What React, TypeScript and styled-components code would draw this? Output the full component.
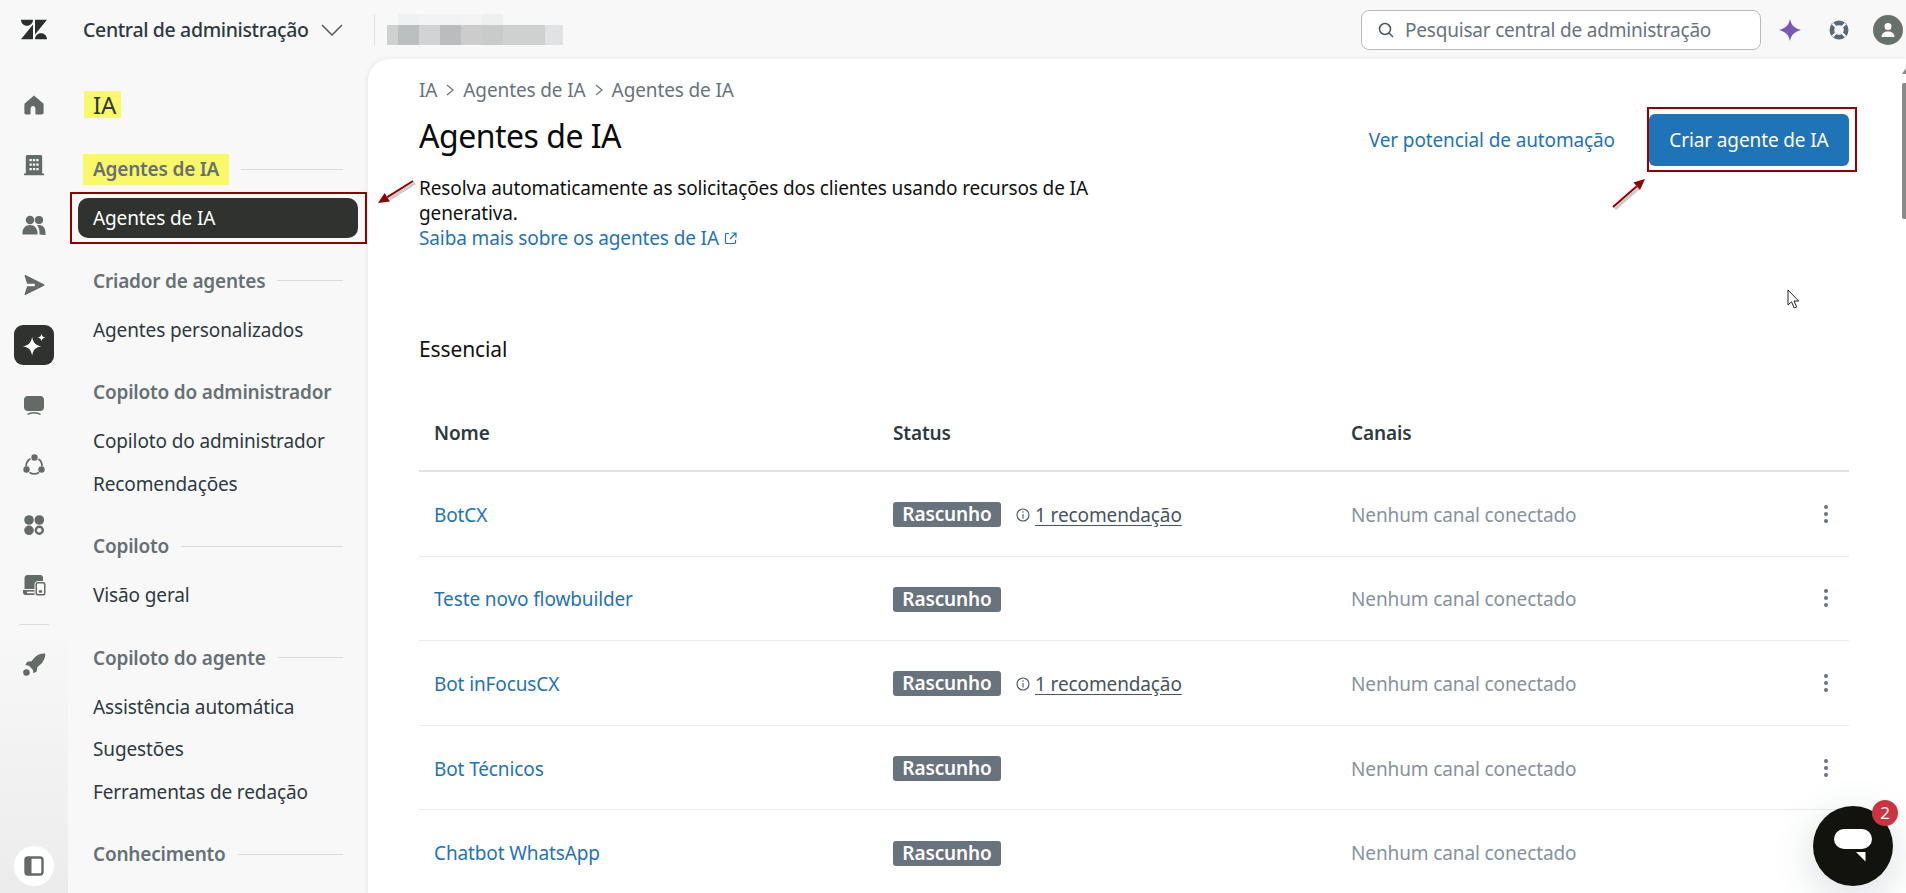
import React from 'react'
import styled, { createGlobalStyle } from 'styled-components'

const GlobalStyle = createGlobalStyle`
  html, body {
    margin: 0;
    padding: 0;
    height: 100%;
    overflow: hidden;
    background: #f8f8f8;
    font-family: "Noto Sans", "Open Sans", "Liberation Sans", sans-serif;
    font-size: 19px;
    letter-spacing: -0.12px;
    color: #2f3941;
  }
`

const Page = styled.div`
  position: relative;
  width: 1906px;
  height: 893px;
  display: flex;
  flex-direction: column;
  overflow: hidden;
  background: #f8f8f8;
`

/* top bar */
const TopBar = styled.header`
  flex: 0 0 59px;
  display: flex;
  align-items: center;
`
const LogoSlot = styled.div`
  width: 68px;
  display: flex;
  justify-content: center;
`
const ProductName = styled.div`
  margin-left: 15px;
  font-size: 19.5px;
  font-weight: 500;
  letter-spacing: -0.35px;
  white-space: nowrap;
  color: #2f3941;
`
const Chevron = styled.svg`
  margin-left: 12px;
  width: 22px;
  height: 12px;
`
const TopDivider = styled.div`
  width: 1px;
  height: 30px;
  margin-left: 31px;
  background: #e0e0e0;
`
const Mosaic = styled.div`
  margin-left: 12px;
  width: 176px;
  height: 31px;
  display: flex;
  flex-direction: column;
  align-self: center;
`
const MosaicRow = styled.div`
  display: flex;
  height: ${(p: { $h: number }) => p.$h}px;
`
const Pixel = styled.div<{ $w: number; $c: string }>`
  width: ${(p) => p.$w}px;
  background: ${(p) => p.$c};
`
const SearchBox = styled.div`
  margin-left: auto;
  width: 400px;
  height: 40px;
  box-sizing: border-box;
  display: flex;
  align-items: center;
  gap: 11px;
  padding-left: 16px;
  background: #fff;
  border: 1px solid #b9bbbb;
  border-radius: 8px;
  color: #68737d;
  letter-spacing: -0.2px;
  white-space: nowrap;
`
const TopIcons = styled.div`
  display: flex;
  align-items: center;
  margin-left: 14px;
  margin-right: 3px;
  gap: 19px;
`
const TopIconSlot = styled.div`
  width: 30px;
  height: 30px;
  display: flex;
  align-items: center;
  justify-content: center;
`
const Avatar = styled.div`
  width: 30px;
  height: 30px;
  border-radius: 50%;
  background: #68716c;
  display: flex;
  align-items: center;
  justify-content: center;
`

/* body */
const Body = styled.div`
  flex: 1;
  min-height: 0;
  display: flex;
`
const Rail = styled.nav`
  flex: 0 0 68px;
  display: flex;
  flex-direction: column;
  align-items: center;
  padding: 16px 0 7px;
  box-sizing: border-box;
  background: linear-gradient(to bottom, #f8f8f8 0%, #f8f8f8 68%, #ececec 100%);
`
const RailItem = styled.div<{ $active?: boolean }>`
  width: 60px;
  height: 60px;
  display: flex;
  align-items: center;
  justify-content: center;
  & > div {
    width: 40px;
    height: 40px;
    border-radius: 9px;
    display: flex;
    align-items: center;
    justify-content: center;
    background: ${(p) => (p.$active ? '#303230' : 'transparent')};
  }
`
const RailDivider = styled.div`
  width: 30px;
  height: 1px;
  margin: 9px 0 10px;
  background: #dcdcdc;
`
const CollapseButton = styled.div`
  margin-top: auto;
  width: 40px;
  height: 40px;
  border-radius: 50%;
  background: #fff;
  display: flex;
  align-items: center;
  justify-content: center;
`

const SideNav = styled.aside`
  flex: 0 0 300px;
  box-sizing: border-box;
  padding: 32px 25px 0;
  overflow: hidden;
`
const NavTitle = styled.div`
  display: inline-block;
  height: 27px;
  line-height: 27px;
  padding: 0 5px 0 9px;
  margin-left: -9px;
  font-size: 24px;
  background: #f8f868;
  color: #2f3941;
`
const NavSection = styled.div<{ $first?: boolean }>`
  margin-top: ${(p) => (p.$first ? '35px' : '27px')};
`
const NavHeading = styled.div`
  height: 28px;
  margin-bottom: 14px;
  display: flex;
  align-items: center;
  font-weight: 600;
  letter-spacing: -0.2px;
  color: #667075;
  white-space: nowrap;
  &::after {
    content: '';
    flex: 1;
    height: 1px;
    margin-left: 12px;
    background: #d8dcde;
  }
`
const Highlight = styled.span`
  background: #f8f868;
  padding: 2px 0 3px 10px;
  margin-left: -10px;
  padding-right: 10px;
  margin-right: -10px;
`
const NavItem = styled.div<{ $active?: boolean }>`
  height: 42.5px;
  display: flex;
  align-items: center;
  margin: 0 -15px;
  white-space: nowrap;
  color: ${(p) => (p.$active ? '#fff' : '#2f3941')};
  & > span {
    flex: 1;
    height: 40px;
    line-height: 40px;
    padding-left: 15px;
    border-radius: 10px;
    background: ${(p) => (p.$active ? '#303230' : 'transparent')};
  }
`

const Main = styled.main`
  position: relative;
  flex: 1;
  min-width: 0;
  box-sizing: border-box;
  padding: 19px 57px 0 51px;
  background: #fff;
  border-top-left-radius: 22px;
  box-shadow: -1px 0 5px rgba(0, 0, 0, 0.07);
  overflow: hidden;
`
const Header = styled.div`
  display: flex;
  justify-content: space-between;
  align-items: flex-start;
`
const Breadcrumb = styled.div`
  height: 24px;
  display: flex;
  align-items: center;
  gap: 8px;
  color: #68737d;
`
const Title = styled.h1`
  margin: 12px 0 0;
  height: 44px;
  line-height: 44px;
  font-size: 32px;
  font-weight: 400;
  letter-spacing: -0.5px;
  color: #0b0b0b;
`
const Description = styled.p`
  margin: 18px 0 0;
  width: 700px;
  line-height: 25px;
  color: #111;
`
const TextLink = styled.a`
  color: #1f73b7;
  text-decoration: none;
`
const ExternalLink = styled(TextLink)`
  display: inline-flex;
  align-items: center;
  gap: 5px;
`
const Actions = styled.div`
  display: flex;
  align-items: center;
  gap: 34px;
  margin-top: 36px;
  white-space: nowrap;
`
const PrimaryButton = styled.button`
  width: 200px;
  height: 52px;
  border: 0;
  border-radius: 6px;
  background: #1f73b7;
  color: #fff;
  font: inherit;
  letter-spacing: inherit;
`
const SectionTitle = styled.h2`
  margin: 84px 0 33px;
  height: 28px;
  line-height: 28px;
  font-size: 21px;
  font-weight: 400;
  color: #111;
`
const TableHead = styled.div`
  display: grid;
  grid-template-columns: 459px 458px 1fr;
  height: 76px;
  box-sizing: border-box;
  align-items: center;
  padding-left: 15px;
  border-bottom: 2px solid #dfe1e3;
  font-weight: 600;
  color: #2f3941;
`
const Row = styled.div`
  display: grid;
  grid-template-columns: 459px 458px 1fr 24px;
  height: 84.6px;
  box-sizing: border-box;
  align-items: center;
  padding: 2px 11px 0 15px;
  border-bottom: 1px solid #e9ebed;
`
const StatusCell = styled.div`
  display: flex;
  align-items: center;
`
const Tag = styled.span`
  width: 108px;
  height: 25px;
  line-height: 25px;
  text-align: center;
  border-radius: 3px;
  background: #68737d;
  color: #fff;
  font-weight: 600;
`
const Recommendation = styled.span`
  display: flex;
  align-items: center;
  gap: 5px;
  margin-left: 15px;
  color: #49545c;
  & > u {
    text-underline-offset: 3px;
  }
`
const Channel = styled.span`
  color: #87929d;
`
const Kebab = styled.svg`
  width: 6px;
  height: 20px;
  margin-top: -2px;
  justify-self: center;
`

/* things lying over the page */
const Scrollbar = styled.div`
  position: absolute;
  top: 24px;
  right: 0;
  width: 4px;
  height: 136px;
  border-radius: 2px 0 0 2px;
  background: #8a8a8a;
  &::before {
    content: '';
    position: absolute;
    top: -15px;
    left: 0;
    border-left: 4px solid transparent;
    border-bottom: 6px solid #8a8a8a;
  }
`
const RedBox = styled.div<{ $x: number; $y: number; $w: number; $h: number }>`
  position: absolute;
  left: ${(p) => p.$x}px;
  top: ${(p) => p.$y}px;
  width: ${(p) => p.$w}px;
  height: ${(p) => p.$h}px;
  box-sizing: border-box;
  border: 2px solid #8f0000;
  pointer-events: none;
`
const Overlay = styled.svg<{ $x: number; $y: number }>`
  position: absolute;
  left: ${(p) => p.$x}px;
  top: ${(p) => p.$y}px;
  overflow: visible;
`
const ChatButton = styled.div`
  position: absolute;
  left: 1813px;
  top: 806px;
  width: 80px;
  height: 80px;
  border-radius: 50%;
  background: #12120f;
  box-shadow: 0 10px 40px rgba(40, 70, 80, 0.18);
  display: flex;
  align-items: center;
  justify-content: center;
`
const ChatBadge = styled.div`
  position: absolute;
  left: 1872px;
  top: 800px;
  width: 26px;
  height: 26px;
  border-radius: 50%;
  background: #cc3340;
  color: #fff;
  font-size: 17px;
  line-height: 26px;
  text-align: center;
`

const ic = '#646b67'

const Ico = ({ children, size = 24, color = ic }: { children: React.ReactNode; size?: number; color?: string }) => (
  <svg width={size} height={size} viewBox="0 0 24 24" fill={color}>{children}</svg>
)

const railIcons: React.ReactNode[] = [
  <Ico key="home"><path d="M12 2.600 3 10.300c-.4.400-.6.800-.6 1.300v8.200c0 .9.700 1.600 1.600 1.600h3.600c.6 0 1-.4 1-1v-4.600c0-1.600 1.100-2.800 2.400-2.800s2.400 1.200 2.400 2.800v4.600c0 .6.400 1 1 1H20c.9 0 1.600-.7 1.600-1.600v-8.200c0-.5-.2-.9-.6-1.300z" /></Ico>,
  <Ico key="building"><path fillRule="evenodd" d="M5.500 2h13c1 0 1.700.7 1.700 1.700V20.500H22v1.700H2v-1.700h1.800V3.700C3.800 2.700 4.500 2 5.500 2zM7.500 6v2.300h2.300V6zm3.400 0v2.300h2.300V6zm3.400 0v2.300h2.300V6zM7.500 10.500v2.300h2.300v-2.300zm3.400 0v2.300h2.300v-2.300zm3.400 0v2.300h2.300v-2.300zM7.500 15v2.300h2.300V15zm3.400 0v2.300h2.300V15zm3.400 0v2.300h2.300V15z" /></Ico>,
  <Ico key="people"><circle cx="8" cy="7" r="4.300" /><circle cx="17" cy="7" r="4.100" /><path d="M.5 20c0-4.500 3-8 7.500-8s7.500 3.500 7.500 8v1.500H.5zM17.500 21.500V19c0-2.500-.8-5-2.500-6.800.7-.2 1.500-.2 2-.2 4 0 6.500 3.500 6.500 7.500v2.500z" /></Ico>,
  <Ico key="send"><path d="M2.500 2.600c0-.5.5-.8 1-.6l18.500 9.200c.6.300.6 1.200 0 1.500L3.500 22c-.5.200-1-.1-1-.6l2.600-8.200h7.400c.5 0 .5-2.400 0-2.400H5.100z" /></Ico>,
  <Ico key="spark" size={30} color="#fff"><path d="M10.500 5.500c.9 4.800 2.700 6.600 7.500 7.500-4.800.9-6.600 2.700-7.500 7.500-.9-4.800-2.700-6.600-7.500-7.500 4.800-.9 6.600-2.700 7.500-7.500zM18 3c.3 1.900 1.100 2.700 3 3-1.900.3-2.700 1.100-3 3-.3-1.900-1.100-2.700-3-3 1.900-.3 2.700-1.100 3-3z" /></Ico>,
  <Ico key="monitor"><path d="M5.500 3h13C20.400 3 22 4.600 22 6.500v8c0 1.900-1.600 3.500-3.500 3.500h-13C3.600 18 2 16.400 2 14.500v-8C2 4.600 3.600 3 5.500 3z" /><path d="M5.500 21.500c1.500-1.300 3.500-1.800 6.500-1.800s5 .5 6.500 1.800" fill="none" stroke={ic} strokeWidth="1.600" /></Ico>,
  <Ico key="share"><circle cx="12.500" cy="4.500" r="3.200" /><circle cx="4.500" cy="16.500" r="3.200" /><circle cx="19.500" cy="16.500" r="3.200" /><path d="M8.500 5.800C5.500 7.500 4 10.500 4.200 13.500M7.500 19.500c3 1.800 6.500 1.800 9.500 0M16.500 6c2.300 1.500 3.500 4 3.500 7" fill="none" stroke={ic} strokeWidth="1.800" /></Ico>,
  <Ico key="apps"><circle cx="7" cy="7" r="4.800" /><circle cx="17.300" cy="7" r="4.800" /><circle cx="7" cy="17.300" r="4.800" /><circle cx="17.300" cy="17.300" r="3.500" fill="none" stroke={ic} strokeWidth="2.400" /></Ico>,
  <Ico key="devices"><path d="M5.500 2h13c1.400 0 2.500 1.100 2.500 2.500V8h-5c-2 0-3.500 1.500-3.500 3.500V16H2.500V5C2.500 3.300 3.800 2 5.500 2zM1 17h11.500v5H3.500C2 22 1 20.800 1 19.500z" /><rect x="5" y="18.600" width="7.500" height="1.700" fill="#f8f8f8" /><rect x="13.500" y="9" width="10" height="13.500" rx="2.200" /><rect x="15" y="10.500" width="7" height="10.500" rx="1" fill="#f8f8f8" /><rect x="16.800" y="17.300" width="3.400" height="2.400" rx=".8" /></Ico>,
]

const navSections = [
  { title: 'Criador de agentes', items: ['Agentes personalizados'] },
  { title: 'Copiloto do administrador', items: ['Copiloto do administrador', 'Recomendações'] },
  { title: 'Copiloto', items: ['Visão geral'] },
  { title: 'Copiloto do agente', items: ['Assistência automática', 'Sugestões', 'Ferramentas de redação'] },
  { title: 'Conhecimento', items: [] as string[] },
]

const agents = [
  { name: 'BotCX', rec: true },
  { name: 'Teste novo flowbuilder', rec: false },
  { name: 'Bot inFocusCX', rec: true },
  { name: 'Bot Técnicos', rec: false },
  { name: 'Chatbot WhatsApp', rec: false },
]

const mosaicTop = [
  { w: 11, c: '#f8f8f8' }, { w: 21, c: '#f0f1f1' }, { w: 42, c: '#f3f3f3' }, { w: 21, c: '#f4f4f4' }, { w: 21, c: '#efefef' },
]
const mosaicBottom = [
  { w: 11, c: '#cfd1d1' }, { w: 21, c: '#bcbfc0' }, { w: 21, c: '#d2d3d4' }, { w: 21, c: '#bbbcbd' }, { w: 21, c: '#cccccc' },
  { w: 21, c: '#c9cbcb' }, { w: 42, c: '#cfd0d0' }, { w: 18, c: '#e0e2e4' },
]

const RedArrow = ({ x, y, x2, y2 }: { x: number; y: number; x2: number; y2: number }) => {
  const a = Math.atan2(y2 - y, x2 - x)
  const hx = x2 - Math.cos(a) * 11
  const hy = y2 - Math.sin(a) * 11
  const nx = -Math.sin(a) * 5
  const ny = Math.cos(a) * 5
  return (
    <Overlay $x={0} $y={0} width="1" height="1">
      <line x1={x + 2} y1={y + 2} x2={hx + 2} y2={hy + 2} stroke="rgba(0,0,0,.2)" strokeWidth="3" />
      <line x1={x} y1={y} x2={hx} y2={hy} stroke="#8f0000" strokeWidth="2" />
      <polygon points={`${x2},${y2} ${hx + nx},${hy + ny} ${hx - nx},${hy - ny}`} fill="#8f0000" />
    </Overlay>
  )
}

export default function App() {
  return (
    <Page>
      <GlobalStyle />
      <TopBar>
        <LogoSlot>
          <svg width="26" height="21" viewBox="0 3.500 26 19.600" fill="#2a2f2d">
            <path d="M12 8.200v14.900H0zM12 3.500C12 6.900 9.300 9.600 6 9.600S0 6.900 0 3.500zM14 23.100c0-3.400 2.700-6 6-6s6 2.600 6 6zM14 18.300V3.500h12z" />
          </svg>
        </LogoSlot>
        <ProductName>Central de administração</ProductName>
        <Chevron viewBox="0 0 22 12"><path d="M1 1l10 10L21 1" fill="none" stroke="#5a625f" strokeWidth="1.600" /></Chevron>
        <TopDivider />
        <Mosaic>
          <MosaicRow $h={11}>{mosaicTop.map((m, i) => <Pixel key={i} $w={m.w} $c={m.c} />)}</MosaicRow>
          <MosaicRow $h={20}>{mosaicBottom.map((m, i) => <Pixel key={i} $w={m.w} $c={m.c} />)}</MosaicRow>
        </Mosaic>
        <SearchBox>
          <svg width="16" height="16" viewBox="0 0 16 16" fill="none" stroke="#49545c" strokeWidth="1.500"><circle cx="7" cy="7" r="5.500" /><path d="M11 11l4 4" /></svg>
          Pesquisar central de administração
        </SearchBox>
        <TopIcons>
          <TopIconSlot>
            <svg width="22" height="22" viewBox="0 0 22 22" fill="#7a58b8"><path d="M11 0c1.300 6 4 9.200 11 11-7 1.800-9.700 5-11 11-1.300-6-4-9.200-11-11C7 9.200 9.700 6 11 0z" /></svg>
          </TopIconSlot>
          <TopIconSlot>
            <svg width="20" height="20" viewBox="0 0 20 20"><circle cx="10" cy="10" r="9.500" fill="#5a6a75" /><circle cx="10" cy="10" r="4.800" fill="#f8f8f8" /><path d="M3.500 3.500l4 4M16.500 3.500l-4 4M3.500 16.500l4-4M16.500 16.500l-4-4" stroke="#f8f8f8" strokeWidth="2.200" /></svg>
          </TopIconSlot>
          <Avatar>
            <svg width="16" height="16" viewBox="0 0 16 16" fill="#fff"><circle cx="8" cy="4.500" r="3.500" /><path d="M1.500 15c0-3.500 2.800-5.500 6.500-5.500s6.500 2 6.500 5.500z" /></svg>
          </Avatar>
        </TopIcons>
      </TopBar>

      <Body>
        <Rail>
          {railIcons.map((icon, i) => (
            <RailItem key={i} $active={i === 4}><div>{icon}</div></RailItem>
          ))}
          <RailDivider />
          <RailItem>
            <div>
              <Ico size={26}>
                <path d="M22.500 1.500c-4.600-.2-8.300 1.500-11 4.700L9.700 8.500l-4 .6-1.700 3 3.300.6 3.600 3.600.6 3.300 3-1.700.6-4 2.300-1.800c3.200-2.700 5-6.400 5.100-10.600z" />
                <circle cx="5" cy="19" r="3" />
              </Ico>
            </div>
          </RailItem>
          <CollapseButton>
            <svg width="20" height="20" viewBox="0 0 20 20"><rect x="1.500" y="1.500" width="17" height="17" rx="2.500" fill="none" stroke={ic} strokeWidth="2.400" /><rect x="1.500" y="1.500" width="6" height="17" fill={ic} /></svg>
          </CollapseButton>
        </Rail>

        <SideNav>
          <NavTitle>IA</NavTitle>
          <NavSection $first>
            <NavHeading><Highlight>Agentes de IA</Highlight><span style={{ width: 10 }} /></NavHeading>
            <NavItem $active><span>Agentes de IA</span></NavItem>
          </NavSection>
          {navSections.map((s) => (
            <NavSection key={s.title}>
              <NavHeading>{s.title}</NavHeading>
              {s.items.map((item) => <NavItem key={item}><span>{item}</span></NavItem>)}
            </NavSection>
          ))}
        </SideNav>

        <Main>
          <Header>
            <div>
              <Breadcrumb>
                IA
                <svg width="10" height="12" viewBox="0 0 10 12" fill="none" stroke="#68737d" strokeWidth="1.200"><path d="M2 1l6 5-6 5" /></svg>
                Agentes de IA
                <svg width="10" height="12" viewBox="0 0 10 12" fill="none" stroke="#68737d" strokeWidth="1.200"><path d="M2 1l6 5-6 5" /></svg>
                Agentes de IA
              </Breadcrumb>
              <Title>Agentes de IA</Title>
              <Description>
                Resolva automaticamente as solicitações dos clientes usando recursos de IA generativa.
                <br />
                <ExternalLink href="#">
                  Saiba mais sobre os agentes de IA
                  <svg width="13" height="13" viewBox="0 0 13 13" fill="none" stroke="#1f73b7" strokeWidth="1.200"><path d="M5 1.500H2.500a1 1 0 0 0-1 1v8a1 1 0 0 0 1 1h8a1 1 0 0 0 1-1V8M7.500 1h4.500v4.500M12 1L6 7" /></svg>
                </ExternalLink>
              </Description>
            </div>
            <Actions>
              <TextLink href="#">Ver potencial de automação</TextLink>
              <PrimaryButton>Criar agente de IA</PrimaryButton>
            </Actions>
          </Header>

          <SectionTitle>Essencial</SectionTitle>
          <TableHead>
            <span>Nome</span>
            <span>Status</span>
            <span>Canais</span>
          </TableHead>
          {agents.map((a) => (
            <Row key={a.name}>
              <TextLink href="#">{a.name}</TextLink>
              <StatusCell>
                <Tag>Rascunho</Tag>
                {a.rec && (
                  <Recommendation>
                    <svg width="14" height="14" viewBox="0 0 14 14" fill="none" stroke="#49545c" strokeWidth="1.100"><circle cx="7" cy="7" r="6" /><path d="M7 6v4.500M7 3.300v1.500" /></svg>
                    <u>1 recomendação</u>
                  </Recommendation>
                )}
              </StatusCell>
              <Channel>Nenhum canal conectado</Channel>
              <Kebab viewBox="0 0 6 20" fill="#68737d"><circle cx="3" cy="3" r="2" /><circle cx="3" cy="10" r="2" /><circle cx="3" cy="17" r="2" /></Kebab>
            </Row>
          ))}
          <Scrollbar />
        </Main>
      </Body>

      <RedBox $x={70} $y={192} $w={297} $h={52} />
      <RedBox $x={1647} $y={107} $w={210} $h={65} />
      <RedArrow x={413} y={181} x2={378} y2={203} />
      <RedArrow x={1613} y={207} x2={1645} y2={179} />
      <Overlay $x={1787} $y={289} width="14" height="21" viewBox="0 0 14 21">
        <path d="M1 1v15l3.500-3.200 2.700 6.200 2.500-1-2.700-6h4.700z" fill="#fff" stroke="#222" strokeWidth="1" />
      </Overlay>
      <ChatButton>
        <svg width="42" height="34" viewBox="0 0 42 34" fill="#fff">
          <rect x="2" y="0" width="38" height="20" rx="10" />
          <path d="M24 23h9.500v9.500z" />
        </svg>
      </ChatButton>
      <ChatBadge>2</ChatBadge>
    </Page>
  )
}
